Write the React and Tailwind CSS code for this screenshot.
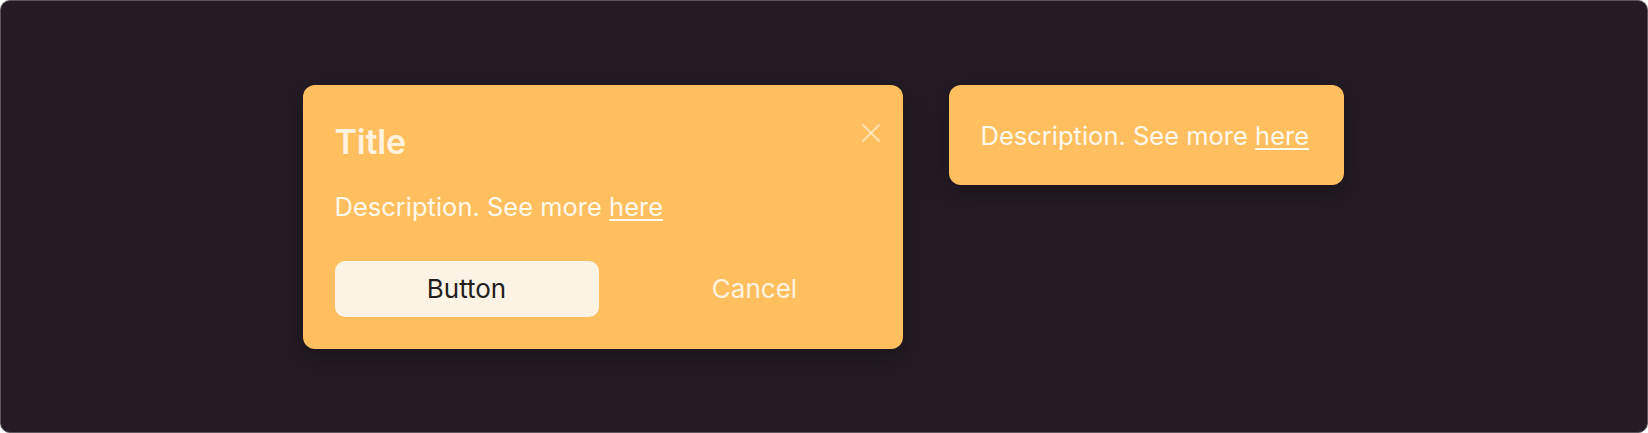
import React from "react";

export default function App() {
  return (
    <div className="w-[1648px] h-[433px] bg-white" style={{ fontFamily: "Inter, 'Noto Sans', sans-serif" }}>
      <div className="w-full h-full rounded-[10px] border border-[#5e565d] bg-[#241b24] flex items-center justify-center">
        <div className="flex items-start gap-[46px] mr-[2px]">
          {/* Dialog card */}
          <div className="w-[600px] h-[264px] rounded-[12px] bg-[#ffbf5e] pl-[32px] pr-[16px] pt-[37px] pb-[32px] flex flex-col shadow-[0_8px_24px_rgba(0,0,0,0.25)]">
            <div className="flex items-start justify-between">
              <h2 className="text-[34px] leading-[40px] font-semibold text-[#fff3e0] tracking-[-0.2px]">Title</h2>
              <button className="-mt-[1px] mr-[4px] w-[24px] h-[24px]" aria-label="Close">
                <svg width="24" height="24" viewBox="0 0 24 24" fill="none" stroke="#fff1d8" strokeOpacity="0.65" strokeWidth="2.2" strokeLinecap="round">
                  <path d="M4 4L20 20" />
                  <path d="M20 4L4 20" />
                </svg>
              </button>
            </div>
            <p className="mt-[29px] text-[25.5px] leading-[32px] text-[#fff8ec] whitespace-nowrap">
              Description. See more{" "}
              <a className="underline decoration-[2px] underline-offset-[3px]">here</a>
            </p>
            <div className="mt-[38px] flex gap-[24px]">
              <button className="w-[264px] h-[56px] rounded-[10px] bg-[#fdf3e5] text-[26px] text-[#221d1b]">Button</button>
              <button className="w-[264px] h-[56px] rounded-[10px] text-[26px] text-[#fff3e0]">Cancel</button>
            </div>
          </div>
          {/* Toast card */}
          <div className="w-[395px] h-[100px] rounded-[12px] bg-[#ffbf5e] px-[32px] flex items-center shadow-[0_8px_24px_rgba(0,0,0,0.25)]">
            <p className="mt-[2px] text-[25.5px] leading-[32px] text-[#fff8ec] whitespace-nowrap">
              Description. See more{" "}
              <a className="underline decoration-[2px] underline-offset-[3px]">here</a>
            </p>
          </div>
        </div>
      </div>
    </div>
  );
}
